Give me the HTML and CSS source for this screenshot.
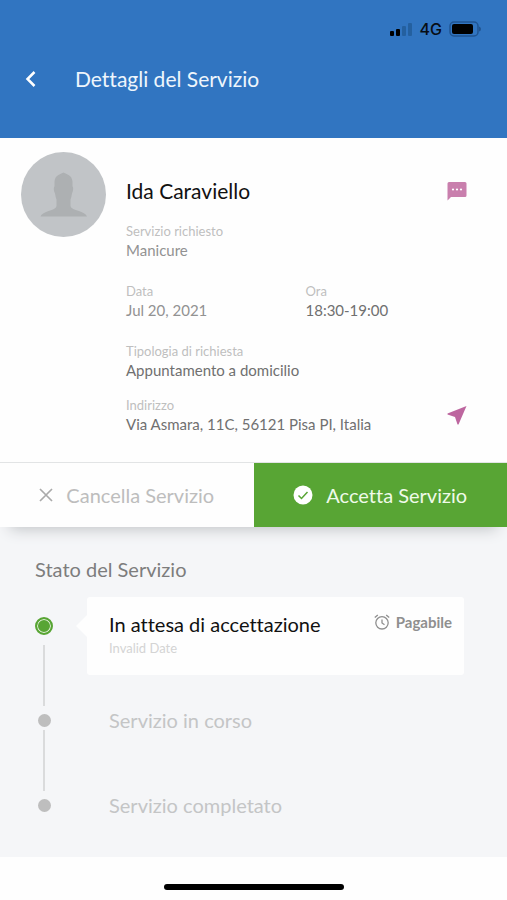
FILE: index.html
```html
<!DOCTYPE html>
<html lang="it">
<head>
<meta charset="utf-8">
<meta name="viewport" content="width=device-width, initial-scale=1">
<title>Dettagli del Servizio</title>
<link rel="stylesheet" href="styles.css">
</head>
<body>
<header class="header">
  <div class="status">
    <svg class="signal" viewBox="0 0 23 15" aria-hidden="true"><rect x="0" y="9" width="4" height="5" rx="1"/><rect x="6" y="7" width="4" height="7" rx="1"/><rect class="dim" x="12" y="4" width="4" height="10" rx="1"/><rect class="dim" x="18" y="1" width="4" height="13" rx="1"/></svg>
    <span>4G</span>
    <svg class="battery" viewBox="0 0 33 16" aria-hidden="true"><rect class="shell" x="1" y="1" width="28" height="14" rx="4"/><rect x="3" y="3" width="21" height="10" rx="2"/><path class="cap" d="M30 5.500q2 .5 2 2.500t-2 2.500z"/></svg>
  </div>
  <div class="titlebar">
    <button class="back" type="button" aria-label="Indietro"><svg viewBox="0 0 12 18" aria-hidden="true"><path d="M9.500 2 2.500 9l7 7"/></svg></button>
    <h1 class="title">Dettagli del Servizio</h1>
  </div>
</header>
<main>
  <section class="profile">
    <svg class="avatar" viewBox="0 0 85 85" aria-hidden="true"><circle class="avatar-bg" cx="42.500" cy="42.500" r="42.500"/><path class="avatar-person" d="M42.500 20.500c2 1.500 8.500 2 9 9v5c1 .5 1 4-.5 7-.5 3-1 5-1.500 6v6.500c.5 2.500 4 3.500 8.500 5 4.500 1.500 7 3 8 5.500h-46.500c1-2.500 3.500-4 8-5.500 4.500-1.500 7.500-2.500 8-5v-6.500c-.5-1-1-3-1.500-6-1.500-3-1.500-6.500-.5-7v-5c.5-7 7-7.500 9-9z"/></svg>
    <div class="info">
      <div class="row name-row">
        <h2 class="name">Ida Caraviello</h2>
        <button class="icon-button chat" type="button" aria-label="Messaggi"><svg viewBox="0 0 20 20" aria-hidden="true"><path d="M2 1h16q1.500 0 1.500 1.500v12q0 1.500-1.500 1.500H4l-3.500 3.500v-17Q.5 1 2 1z"/><g class="dots"><circle cx="6" cy="8.500" r="1.100"/><circle cx="10" cy="8.500" r="1.100"/><circle cx="14" cy="8.500" r="1.100"/></g></svg></button>
      </div>
      <dl class="details">
        <div class="wide light"><dt>Servizio richiesto</dt><dd>Manicure</dd></div>
        <div class="light"><dt>Data</dt><dd>Jul 20, 2021</dd></div>
        <div><dt>Ora</dt><dd>18:30-19:00</dd></div>
        <div class="wide"><dt>Tipologia di richiesta</dt><dd>Appuntamento a domicilio</dd></div>
      </dl>
      <div class="row address">
        <dl class="details"><div class="wide"><dt>Indirizzo</dt><dd>Via Asmara, 11C, 56121 Pisa PI, Italia</dd></div></dl>
        <button class="icon-button" type="button" aria-label="Apri mappa"><svg viewBox="0 0 20 20" aria-hidden="true"><path d="M19.500 1 .5 8.500v1l7.500 2.500 2.500 7.500h1z"/></svg></button>
      </div>
    </div>
  </section>
  <div class="actions">
    <button class="action cancel" type="button"><svg class="cross" viewBox="0 0 14 14" aria-hidden="true"><path d="M1 1l12 12M13 1 1 13"/></svg>Cancella Servizio</button>
    <button class="action accept" type="button"><svg class="check" viewBox="0 0 20 20" aria-hidden="true"><circle cx="10" cy="10" r="9.500"/><path d="M5.500 10.500l3 3 6-6.500"/></svg>Accetta Servizio</button>
  </div>
  <section class="state">
    <h2 class="state-title">Stato del Servizio</h2>
    <ol class="timeline">
      <li class="step current">
        <div class="rail"><span class="dot"></span><span class="line"></span></div>
        <div class="card">
          <div><h3 class="card-title">In attesa di accettazione</h3><p class="date">Invalid Date</p></div>
          <div class="badge"><svg viewBox="0 0 16 16" aria-hidden="true"><circle cx="8" cy="8.800" r="6.200"/><path d="M8 5.500V9l2.500 1.700M.8 3.600 3.800 1M15.200 3.600 12.200 1"/></svg>Pagabile</div>
        </div>
      </li>
      <li class="step"><div class="rail"><span class="dot"></span><span class="line"></span></div><h3 class="step-title">Servizio in corso</h3></li>
      <li class="step"><div class="rail"><span class="dot"></span></div><h3 class="step-title">Servizio completato</h3></li>
    </ol>
  </section>
</main>
<footer class="home"><span class="home-bar"></span></footer>
</body>
</html>
```

FILE: styles.css
```css
* { box-sizing: border-box; }

body {
  margin: 0;
  min-height: 100vh;
  display: flex;
  flex-direction: column;
  background: #fefefe;
  color: #777;
  font-family: Lato, "Liberation Sans", sans-serif;
  font-variant-ligatures: none;
}

h1, h2, h3, p, dl, dd, ol { margin: 0; padding: 0; font-weight: 400; }
ol { list-style: none; }
svg { display: block; flex: none; }
button { border: 0; padding: 0; background: none; font: inherit; cursor: pointer; }
main { flex: 1; display: flex; flex-direction: column; }

.header { background: #3175c1; padding: 19px 25px 44px; }
.status {
  display: flex;
  align-items: center;
  justify-content: flex-end;
  gap: 7px;
  height: 20px;
  color: #080d14;
  font: 500 16px/20px Inter, sans-serif;
}
.signal { width: 23px; height: 15px; }
.battery { width: 33px; height: 16px; }
.dim { fill: #24609f; }
.shell { fill: none; stroke: #205491; stroke-width: 1.5; }
.cap { fill: #205491; }

.titlebar { display: flex; align-items: center; margin-top: 25px; gap: 38px; }
.back { width: 12px; height: 30px; display: flex; align-items: center; }
.back svg { width: 12px; height: 18px; fill: none; stroke: #fff; stroke-width: 2.5; }
.title { color: #eef5fc; font-size: 21px; line-height: 30px; }

.profile { display: flex; gap: 20px; padding: 14px 22px 28px 21px; }
.avatar { width: 85px; height: 85px; }
.avatar-bg { fill: #c1c4c7; }
.avatar-person { fill: #adb0b2; }
.info { flex: 1; padding-top: 25px; }
.row { display: flex; align-items: center; justify-content: space-between; }
.name-row { margin-bottom: 17px; }
.name { color: #111; font-size: 21px; line-height: 28px; }
.icon-button { width: 56px; height: 28px; display: flex; align-items: center; justify-content: center; }
.icon-button svg { width: 20px; height: 20px; fill: #bd669f; }
.chat svg { fill: #c97fad; }
.chat .dots { fill: #fff; }

.details { display: grid; grid-template-columns: 1fr 1fr; row-gap: 22px; }
.wide { grid-column: 1 / -1; }
dt { color: #bfbfbf; font-size: 13px; line-height: 19px; }
dd { color: #707070; font-size: 15px; line-height: 19px; }
.light dd { color: #929292; }
.address { margin-top: 16px; }

.actions {
  position: relative;
  display: grid;
  grid-template-columns: 1fr 1fr;
  border-top: 1px solid #e2e4e5;
  background: #fefefe;
  box-shadow: 0 12px 14px -10px #bfc2c5;
}
.action {
  display: flex;
  align-items: center;
  justify-content: center;
  gap: 13px;
  height: 64px;
  font-size: 20px;
  line-height: 24px;
}
.cancel { color: #bdbdbd; }
.cross { width: 14px; height: 14px; fill: none; stroke: #aaa; stroke-width: 1.7; }
.accept { background: #58a534; color: #effae9; }
.check { width: 20px; height: 20px; fill: #fff; }
.check path { fill: none; stroke: #58a534; stroke-width: 1.5; }

.state { flex: 1; padding: 28px 43px 40px 35px; background: #f5f6f8; }
.state-title { margin-bottom: 14px; color: #7d7d7d; font-size: 20px; line-height: 28px; }
.step { display: flex; gap: 34px; min-height: 85px; }
.step:last-child { min-height: 24px; }
.rail { display: flex; flex-direction: column; align-items: center; width: 18px; padding-top: 6px; }
.dot { width: 13px; height: 13px; border-radius: 50%; background: #bebebe; }
.line { flex: 1; width: 2px; margin: 3px 0 2px; background: #dadbdc; }
.step-title { margin-left: 22px; color: #c4c5c6; font-size: 20px; line-height: 24px; }

.current { min-height: 111px; }
.current .rail { padding-top: 20px; }
.current .dot { width: 18px; height: 18px; border: 2px solid #58a534; background: #58a534; box-shadow: inset 0 0 0 1px #e6f2df; }
.current .line { margin-top: 10px; }
.card {
  position: relative;
  flex: 1;
  align-self: flex-start;
  display: flex;
  justify-content: space-between;
  min-height: 78px;
  padding: 13px 12px 14px 22px;
  border-radius: 3px;
  background: #fefefe;
}
.card::before {
  content: "";
  position: absolute;
  left: -11px;
  top: 18px;
  border: solid transparent;
  border-width: 11px 11px 11px 0;
  border-right-color: #fefefe;
}
.card-title { color: #111; font-size: 20px; line-height: 28px; }
.date { color: #d4d4d4; font-size: 13px; line-height: 20px; }
.badge { display: flex; align-items: center; gap: 6px; height: 24px; color: #8f8f8f; font-size: 15px; font-weight: 700; }
.badge svg { width: 16px; height: 16px; fill: none; stroke: #8f8f8f; stroke-width: 1.3; }

.home { display: flex; justify-content: center; padding: 27px 0 10px; }
.home-bar { width: 180px; height: 6px; border-radius: 3px; background: #000; }
```
